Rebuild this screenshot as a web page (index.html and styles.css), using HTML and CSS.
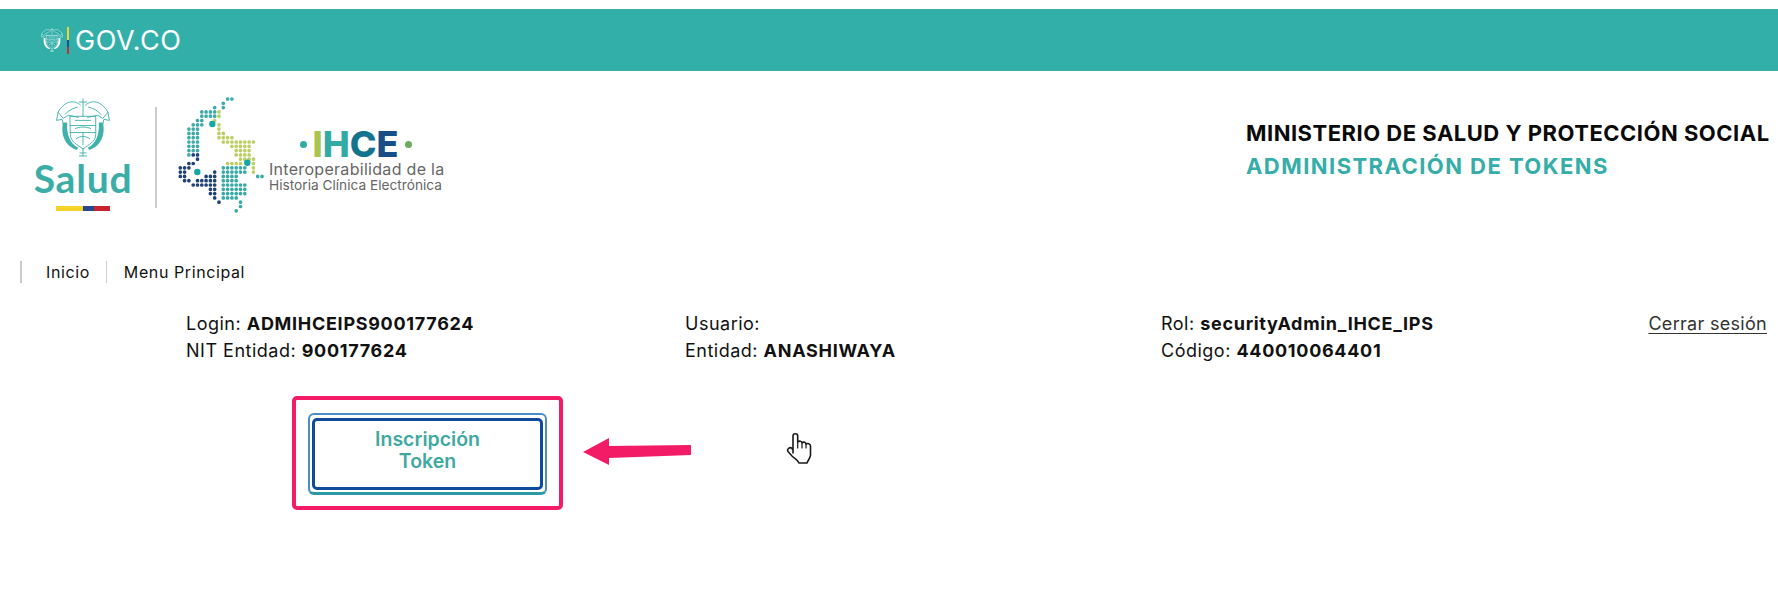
FILE: index.html
```html
<!DOCTYPE html>
<html lang="es">
<head>
<meta charset="utf-8">
<title>Administración de Tokens</title>
<link rel="stylesheet" href="styles.css">
</head>
<body>
<svg class="defs" width="0" height="0" aria-hidden="true">
  <defs>
    <symbol id="coat" viewBox="0 0 53 58">
      <g fill="none" stroke="currentColor" stroke-width="0.9" stroke-linejoin="round" stroke-linecap="round">
        <path d="M24 7 C18 1 8 3 2 14 L7 20 L12 17 L22 19 M29 7 C35 1 45 3 51 14 L46 20 L41 17 L31 19"/>
        <path d="M2 14 L0.500 22 L6 21 L7 26 M51 14 L52.500 22 L47 21 L46 26"/>
        <path d="M26.500 1 V18 M23 4 H30 M21 9 C17 10 12 12 9 16 M32 9 C36 10 41 12 44 16"/>
        <path d="M14 18 H39 V36 C39 43 32 46 26.500 50 C21 46 14 43 14 36Z"/>
        <path d="M14 27 H39 M14 34 H39 M19 22 H34 M19 30 C23 28 30 28 34 30 M20 40 C24 37 29 37 33 40 M26.500 34 V46"/>
        <path d="M26.500 50 V57 M23.500 54 H29.500 M23 57 H30"/>
      </g>
      <g fill="currentColor">
        <path d="M7 24 C4 36 9 47 20 51 L22 49 C14 45 10 36 11 24Z"/>
        <path d="M46 24 C49 36 44 47 33 51 L31 49 C39 45 43 36 42 24Z"/>
      </g>
    </symbol>
  </defs>
</svg>

<div class="govbar">
  <svg class="gov-coat"><use href="#coat"/></svg>
  <span class="gov-flag"></span>
  <span class="gov-text">GOV.CO</span>
</div>

<header class="brand">
  <div class="salud">
    <svg class="salud-coat"><use href="#coat"/></svg>
    <div class="salud-text">Salud</div>
    <div class="flag"><i class="f-y"></i><i class="f-b"></i><i class="f-r"></i></div>
  </div>
  <span class="brand-rule"></span>
  <svg class="map" viewBox="0 0 95 125" aria-hidden="true">
    <path class="d-teal" d="M52.600 7H56.900 M48.300 11.300H52.600 M39.700 15.600H44 M48.300 15.600H48.400 M26.800 19.900H44 M26.800 24.200H39.700 M22.500 28.500H31.100 M18.200 32.800H31.100 M13.900 37.100H26.800 M13.900 41.400H26.800 M13.900 45.700H26.800 M13.900 50H26.800 M13.900 54.300H26.800 M13.900 58.600H26.800 M13.900 62.900H14"/>
    <path class="d-lime" d="M44 19.900H44.100 M44 24.200H44.100 M39.700 28.500H44 M44 32.800H48.300 M44 37.100H48.300 M44 41.400H52.600 M44 45.700H61.200 M48.300 50H78.400 M56.900 54.300H78.400 M61.200 58.600H78.400 M61.200 62.900H78.400 M65.500 67.200H78.400 M52.600 71.500H65.500 M78.400 71.500H78.500 M78.400 75.800H78.500 M78.400 80.100H82.700"/>
    <path class="d-navy" d="M18.200 62.900H26.800 M22.500 67.200H26.800 M13.900 71.500H22.500 M5.300 75.800H18.200 M5.300 80.100H13.900 M39.700 80.100H44 M5.300 84.400H13.900 M31.100 84.400H44 M9.600 88.700H18.200 M22.500 88.700H44 M18.200 93H44 M35.400 97.300H44 M35.400 101.600H44 M39.700 105.900H44 M44 110.200H44.100"/>
    <path class="d-teal2" d="M48.300 75.800H69.800 M48.300 80.100H74.100 M48.300 84.400H65.500 M82.700 84.400H87 M48.300 88.700H65.500 M48.300 93H69.800 M48.300 97.300H69.800 M48.300 101.600H69.800 M48.300 105.900H65.500 M65.500 110.200H65.600 M65.500 114.500H65.600 M61.200 118.800H65.500"/>
    <circle class="d-pin" cx="37.300" cy="32" r="3.200"/>
    <circle class="d-pin" cx="72.300" cy="70.700" r="3.200"/>
    <circle class="d-pin" cx="22.300" cy="80" r="3.200"/>
  </svg>
  <div class="ihce">
    <div class="ihce-mark">
      <span class="dot dot-teal"></span>
      <span class="ihce-word"><span class="c-i">I</span><span class="c-h">H</span><span class="c-c">C</span><span class="c-e">E</span></span>
      <span class="dot dot-green"></span>
    </div>
    <div class="ihce-sub ihce-sub-a">Interoperabilidad de la</div>
    <div class="ihce-sub ihce-sub-b">Historia Clínica Electrónica</div>
  </div>
  <div class="titles">
    <div class="title-main">MINISTERIO DE SALUD Y PROTECCIÓN SOCIAL</div>
    <div class="title-sub">ADMINISTRACIÓN DE TOKENS</div>
  </div>
</header>

<nav class="crumbs">
  <a class="crumb crumb-first">Inicio</a>
  <a class="crumb">Menu Principal</a>
</nav>

<section class="info">
  <div class="info-col">
    <div>Login: <b>ADMIHCEIPS900177624</b></div>
    <div>NIT Entidad: <b>900177624</b></div>
  </div>
  <div class="info-col">
    <div>Usuario:</div>
    <div>Entidad: <b>ANASHIWAYA</b></div>
  </div>
  <div class="info-col">
    <div>Rol: <b>securityAdmin_IHCE_IPS</b></div>
    <div>Código: <b>440010064401</b></div>
  </div>
  <a class="logout">Cerrar sesión</a>
</section>

<section class="action">
  <div class="highlight">
    <div class="btn-outer">
      <button class="btn-inner">Inscripción<br>Token</button>
    </div>
  </div>
  <svg class="arrow" viewBox="0 0 108 32" aria-hidden="true">
    <path d="M0 18 L26 4 L26 12 L108 11 L108 21 L26 24 L26 31Z" fill="#f31a66"/>
  </svg>
  <svg class="hand" viewBox="-1 -1 26 33" aria-hidden="true">
    <path d="M6 20 V3 C6 0 10.700 0 10.700 3 V9 C12 7.500 15 8 15 10 C16.500 8.500 19 9 19 11 C20.500 10 23.500 10.500 23.500 13 V22 C23.500 25 21 27 20 30 H12 C11 27 8 26 5 23 L1 18.500 C-0.500 16 3 13.500 5 15.500 L6 17" fill="#fff" stroke="#1a1a1a" stroke-width="1.600" stroke-linejoin="round" stroke-linecap="round"/>
    <path d="M10.700 9 V15 M15 10 V15 M19 11 V15" fill="none" stroke="#1a1a1a" stroke-width="1.200" stroke-linecap="round"/>
  </svg>
</section>
</body>
</html>
```

FILE: styles.css
```css
* { box-sizing: border-box; }
html, body { margin: 0; padding: 0; background: #fff; }
body {
  width: 1778px;
  height: 592px;
  overflow: hidden;
  padding-top: 9px;
  font-family: Inter, "Open Sans", "Liberation Sans", sans-serif;
  color: #111;
}
.defs { position: absolute; }

.govbar {
  height: 62px;
  background: #33afa9;
  display: flex;
  align-items: center;
  padding-left: 41px;
}
.gov-coat { width: 22px; height: 24px; color: #fff; }
.gov-flag {
  width: 2px;
  height: 27px;
  margin: 0 6px 0 4px;
  background: linear-gradient(#f0d232 0 50%, #1e4f8c 50% 75%, #c2303a 75%);
}
.gov-text { font-size: 27px; font-weight: 400; color: #fff; letter-spacing: 0.6px; }

.brand {
  display: flex;
  align-items: flex-start;
  height: 190px;
  padding: 21px 9px 0 34px;
}
.salud { width: 98px; padding-top: 6px; display: flex; flex-direction: column; align-items: center; }
.salud-coat { width: 54px; height: 59px; color: #3fb0aa; }
.salud-text { font-family: Lato, sans-serif; font-size: 39px; font-weight: 700; line-height: 40px; color: #3bada7; margin-top: 1px; letter-spacing: 0.8px; }
.flag { display: flex; width: 54px; height: 5px; margin-top: 8px; }
.flag i { display: block; height: 100%; }
.f-y { width: 27px; background: #f5d327; }
.f-b { width: 11px; background: #27478f; }
.f-r { width: 16px; background: #c8232f; }
.brand-rule { width: 2px; height: 101px; margin: 15px 0 0 23px; background: #ccc; }

.map { width: 95px; height: 125px; margin-left: 18px; flex: none; }
.map path { fill: none; stroke-width: 3.700; stroke-linecap: round; stroke-dasharray: 0 4.300; }
.d-teal { stroke: #3daaaa; }
.d-teal2 { stroke: #37aaa6; }
.d-lime { stroke: #bccf62; }
.d-navy { stroke: #1f4178; }
.d-pin { fill: #16a6a6; }

.ihce { width: 178px; margin: 38px 0 0 -1px; }
.ihce-mark { display: flex; align-items: center; justify-content: center; gap: 6px; height: 28px; width: 173px; }
.dot { width: 7px; height: 7px; border-radius: 50%; }
.dot-teal { background: #35a9a4; }
.dot-green { background: #6aab5e; }
.ihce-word { font-size: 36px; font-weight: 800; line-height: 28px; }
.c-i { color: #a8c552; }
.c-h { color: #33aaa3; }
.c-c { color: #14748f; }
.c-e { color: #174f86; }
.ihce-sub { color: #666; white-space: nowrap; }
.ihce-sub-a { font-size: 16px; line-height: 18px; letter-spacing: 0.300px; margin-top: 2px; }
.ihce-sub-b { font-size: 13.700px; line-height: 14px; }

.titles { margin-left: auto; padding-top: 25px; width: 523px; font-size: 22px; font-weight: 700; line-height: 32.500px; white-space: nowrap; }
.title-main { color: #0a0a0a; letter-spacing: 0.500px; }
.title-sub { color: #35ada8; letter-spacing: 1.450px; }

.crumbs { display: flex; align-items: center; height: 22px; margin-left: 20px; font-size: 16px; letter-spacing: 0.600px; }
.crumb { display: flex; align-items: center; height: 22px; padding-left: 17px; padding-right: 17px; border-left: 1px solid #ccc; color: #111; }
.crumb-first { border-left: 2px solid #ccc; padding-left: 24px; padding-right: 16px; }

.info { display: flex; height: 62px; margin-top: 27px; padding-left: 186px; padding-right: 11px; font-size: 18px; line-height: 27px; letter-spacing: 0.500px; }
.info-col { flex: none; white-space: nowrap; }
.info-col:nth-child(1) { width: 499px; }
.info-col:nth-child(2) { width: 476px; }
.info-col:nth-child(3) { width: 400px; }
.info b { font-weight: 700; letter-spacing: 0.700px; }
.logout { font-size: 18px; line-height: 27px; letter-spacing: 0.300px; text-decoration: underline; text-underline-offset: 3px; color: #333; white-space: nowrap; margin-left: auto; }

.action { display: flex; align-items: center; padding-left: 292px; margin-top: 24px; }
.highlight { width: 271px; height: 114px; border: 4px solid #f31a66; border-radius: 5px; padding: 13px 12px; background: #fff; }
.btn-outer { height: 82px; border: 2px solid #4a8cc9; border-bottom: 3px solid #2a99a6; border-radius: 6px; padding: 3px 2px 2px; }
.btn-inner { display: block; width: 100%; height: 100%; background: #fff; border: 3px solid #0f4a9c; border-radius: 5px; font-family: inherit; font-size: 19.500px; font-weight: 600; line-height: 21.500px; color: #3fa9a0; padding: 0 0 7px; }
.arrow { width: 108px; height: 32px; margin: 0 0 6px 20px; flex: none; }
.hand { width: 26px; height: 33px; margin: 0 0 10px 95px; flex: none; }
```
